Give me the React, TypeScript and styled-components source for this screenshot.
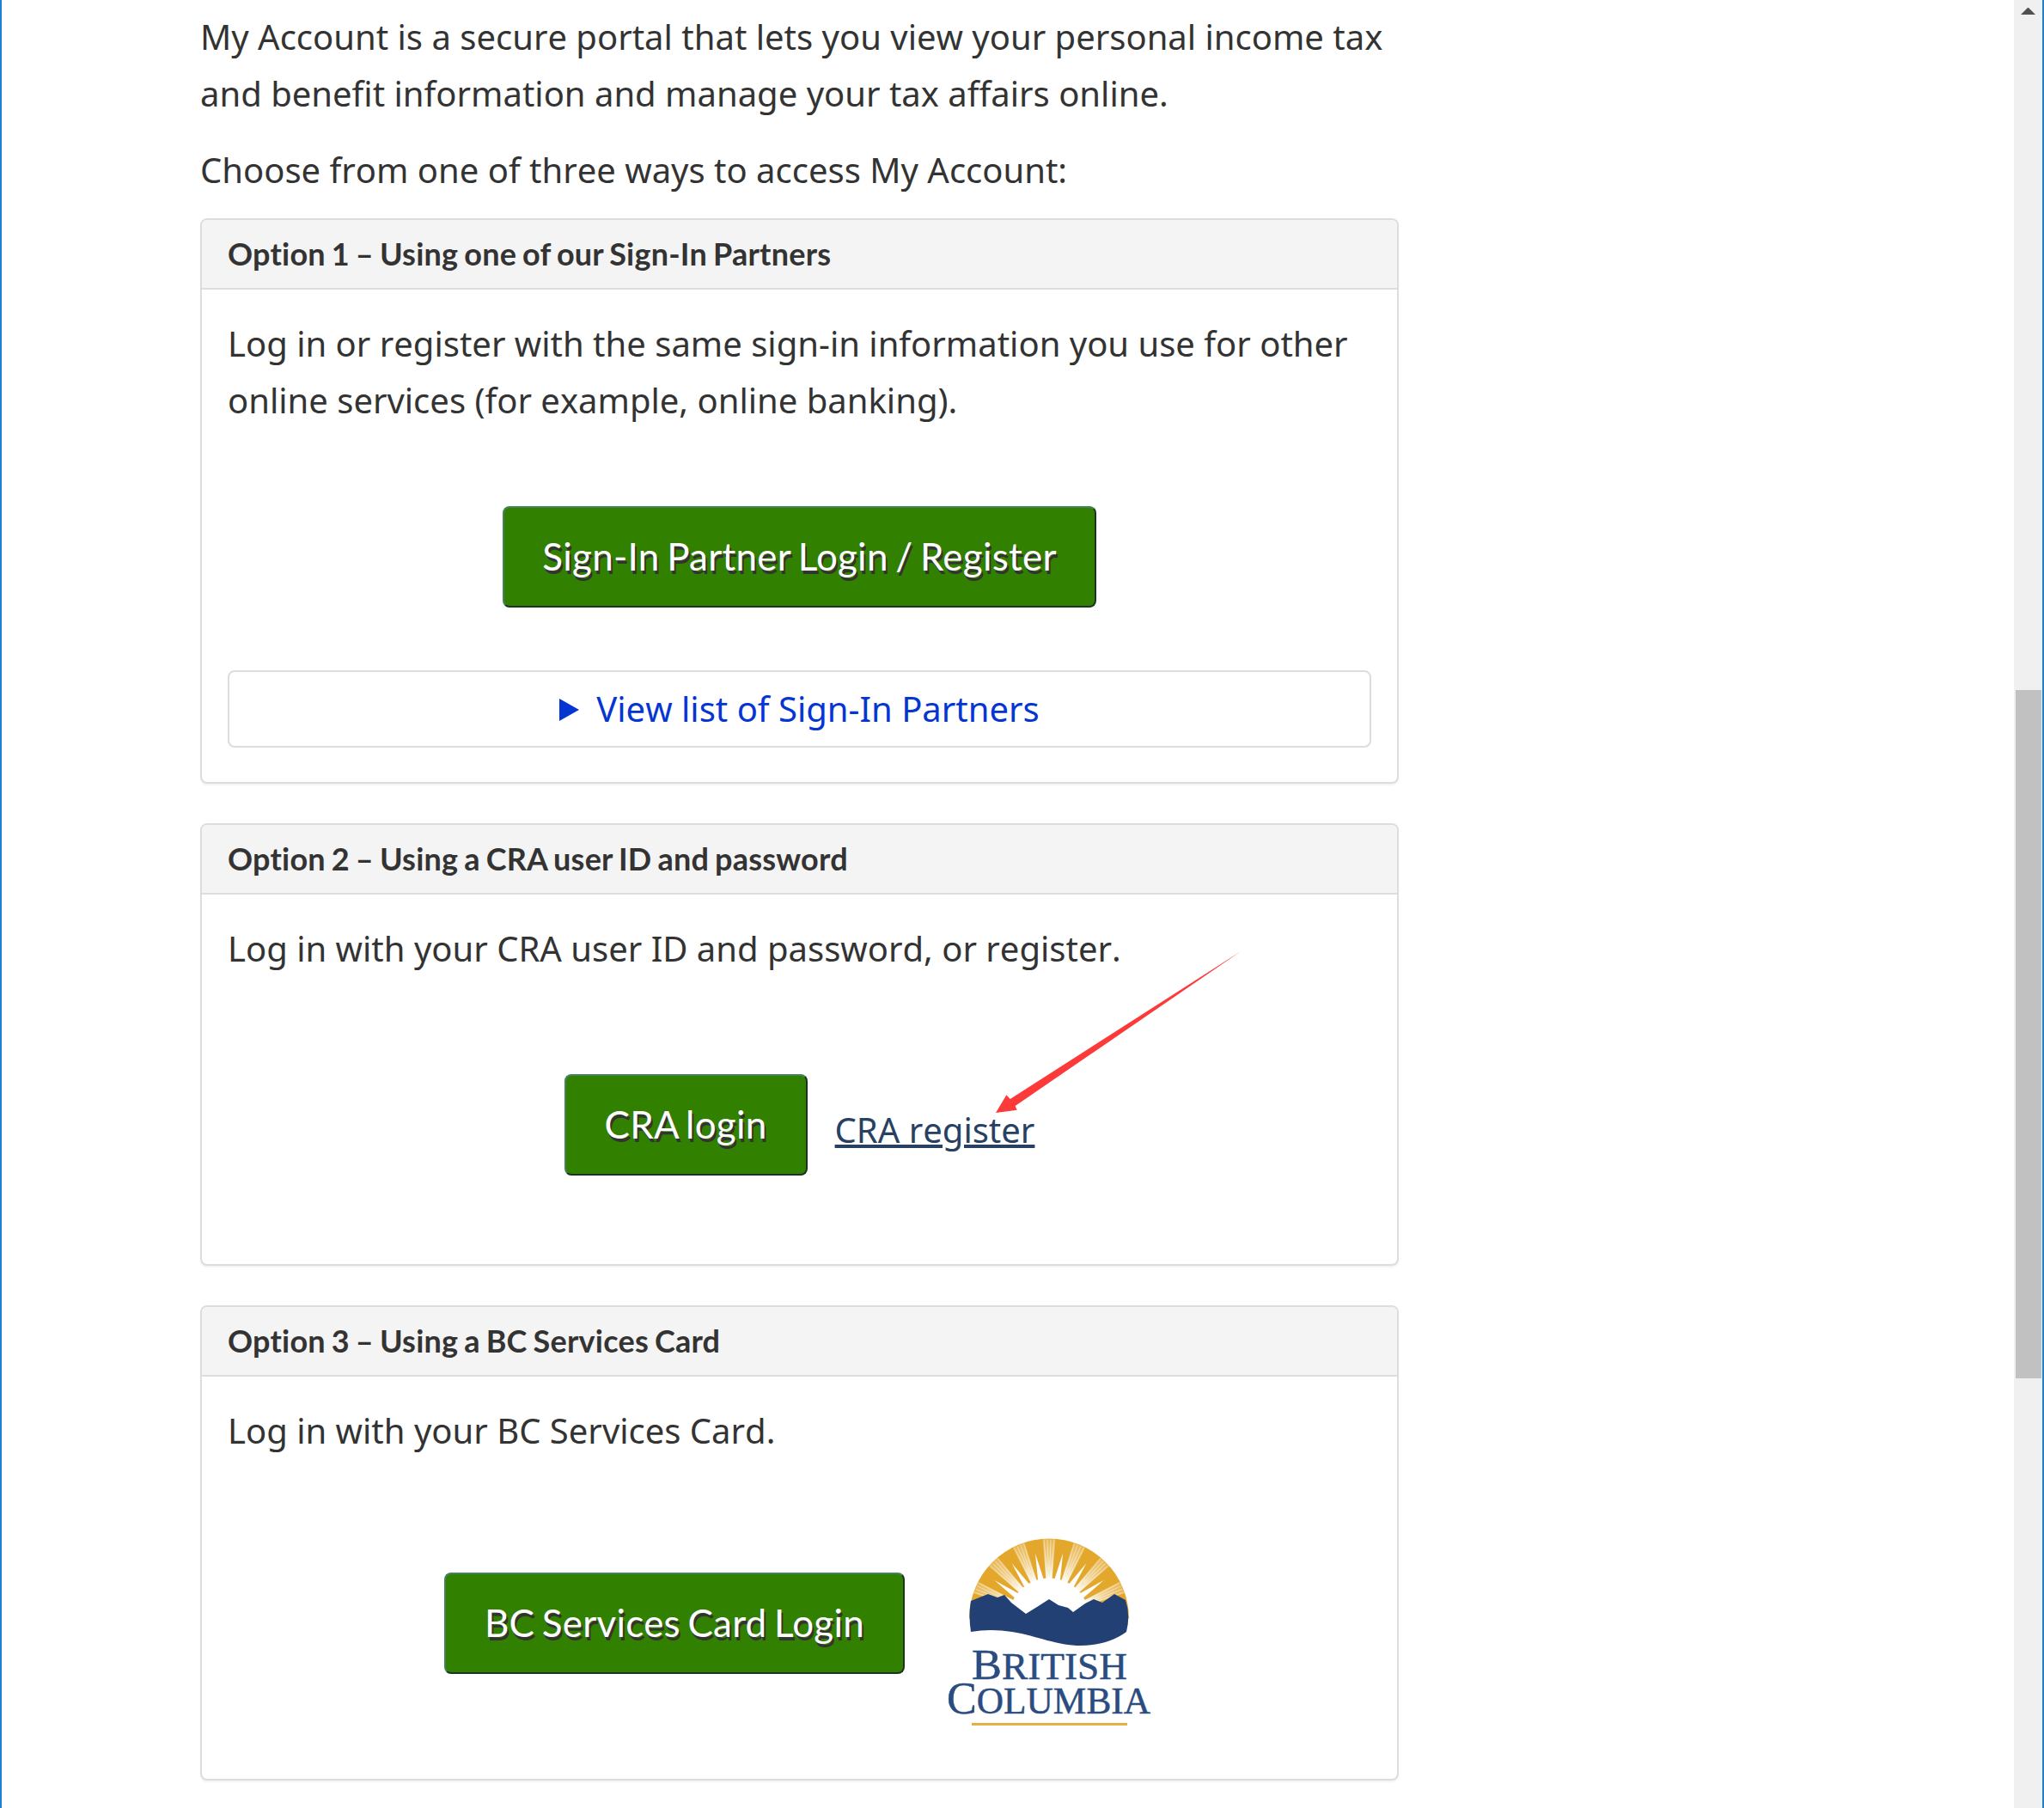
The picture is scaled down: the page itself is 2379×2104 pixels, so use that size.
import React from "react";
import styled, { createGlobalStyle } from "styled-components";

const GlobalStyle = createGlobalStyle`
  *, *::before, *::after { box-sizing: border-box; }
  html, body { margin: 0; height: 2104px; overflow: hidden; background: #fff; }
  body {
    font-family: "Noto Sans", sans-serif;
    font-size: 40px;
    line-height: 66px;
    font-kerning: none;
    font-variant-ligatures: none;
    color: #333;
  }
`;

const Window = styled.div`
  display: flex;
  width: 2379px;
  height: 2104px;
  overflow: hidden;
  border-left: 2px solid #1883d7;
  border-right: 2px solid #1883d7;
`;

const Content = styled.main`
  width: 2342px;
  padding: 10px 0 0 231px;
`;

const Column = styled.div`
  width: 1395px;
`;

const Text = styled.p`
  margin: 0 0 23px;
`;

const Panel = styled.section<{ $height: number }>`
  display: flex;
  flex-direction: column;
  height: ${(p) => p.$height}px;
  margin-bottom: 46px;
  border: 2px solid #ddd;
  border-radius: 8px;
  box-shadow: 0 2px 2px rgba(0, 0, 0, 0.05);
  background: #fff;
`;

const PanelHeading = styled.header`
  height: 81px;
  flex: none;
  padding: 19px 30px;
  border-bottom: 2px solid #ddd;
  border-radius: 6px 6px 0 0;
  background: #f4f4f4;
`;

const PanelTitle = styled.h3`
  margin: 0;
  font: 700 36px/40px Lato, sans-serif;
  font-variant-ligatures: none;
  letter-spacing: 0.22px;
  word-spacing: -2px;
`;

const PanelBody = styled.div`
  display: flex;
  flex-direction: column;
  padding: 30px;
`;

const Actions = styled.div<{ $top: number; $gap?: number; $indent?: number }>`
  display: flex;
  justify-content: center;
  align-items: center;
  gap: ${(p) => p.$gap ?? 0}px;
  margin-top: ${(p) => p.$top}px;
  padding-left: ${(p) => p.$indent ?? 0}px;
`;

const Button = styled.button<{ $width: number; $lift?: number }>`
  width: ${(p) => p.$width}px;
  height: 118px;
  margin: 0 0 ${(p) => p.$lift ?? 0}px;
  padding: 0 0 2px;
  border: 2px solid;
  border-color: #458259 #1c3423 #1c3423 #458259;
  border-radius: 8px;
  background: #318000;
  color: #fff;
  font: 400 44px/64px Lato, sans-serif;
  font-variant-ligatures: none;
  letter-spacing: 0.25px;
  word-spacing: -3px;
  white-space: nowrap;
  text-shadow: 2px 4px 0 #333;
`;

const Details = styled.details`
  height: 90px;
  margin-top: 73px;
  border: 2px solid #ddd;
  border-radius: 8px;
`;

const Summary = styled.summary`
  display: flex;
  justify-content: center;
  align-items: center;
  gap: 20px;
  height: 86px;
  color: #0535d2;
  list-style: none;
`;

const Marker = styled.svg`
  margin-top: 2px;
`;

const RegisterLink = styled.a`
  position: relative;
  margin-top: 12px;
  color: #284162;
  text-decoration: underline;
`;

const Arrow = styled.svg`
  position: absolute;
  left: 183px;
  top: -182px;
  overflow: visible;
  pointer-events: none;
`;

const Logo = styled.div`
  width: 290px;
  height: 270px;
`;

const Scrollbar = styled.aside`
  width: 33px;
  flex: none;
  display: flex;
  flex-direction: column;
  align-items: center;
  padding-top: 9px;
  background: #f0f0f0;
`;

const Thumb = styled.div`
  width: 30px;
  height: 801px;
  margin-top: 786px;
  background: #c1c1c1;
`;

const beamAngles = [-67, -44.5, -22.5, 0, 22.5, 44.5, 67];
const notchAngles = [-55, -34, -12, 12, 34, 55];

function BritishColumbiaLogo() {
  return (
    <svg width="290" height="270" viewBox="0 0 290 270" role="img" aria-label="British Columbia">
      <defs>
        <clipPath id="sunDisc">
          <path d="M48 123.5 A93 93 0 0 1 234 123.5 Z" />
        </clipPath>
        <linearGradient id="beam" gradientUnits="userSpaceOnUse" x1="0" y1="32" x2="0" y2="78">
          <stop offset="0" stopColor="#fff" stopOpacity="0.2" />
          <stop offset="0.55" stopColor="#fff" stopOpacity="0.5" />
          <stop offset="1" stopColor="#fff" />
        </linearGradient>
      </defs>
      <g clipPath="url(#sunDisc)">
        <rect x="45" y="25" width="195" height="100" fill="#e3a82b" />
        {beamAngles.map((a) => (
          <g key={a} transform={`rotate(${a} 141 123.5)`}>
            <path d="M133.5 30 H148.500 L144.500 79 H137.500 Z" fill="url(#beam)" />
            <path
              d="M135 32 L138.500 72 M139 32 L140.200 66 M143 32 L141.800 66 M147 32 L143.500 72"
              stroke="#fff"
              strokeOpacity="0.45"
              strokeWidth="1"
            />
          </g>
        ))}
        {notchAngles.map((a) => (
          <path
            key={a}
            transform={`rotate(${a} 141 123.5)`}
            d="M141 46 L144.500 79 H137.500 Z"
            fill="#fff"
          />
        ))}
        <circle cx="141" cy="123.5" r="47" fill="#fff" />
      </g>
      <path
        d="M50 103 L70 95 L81 99 L89 96 L97 105 L114 118 L127 110 L141 101 L152 108 L163 111 L169 116 L183 106 L193 101 L203 105 L217 95 L230 102 Q236 120 231 139 C215 151 194 155 178 155 C150 155 128 144 98 139 Q73 135 50 139 Q47 120 50 103 Z"
        fill="#234075"
      />
      <g
        fill="#2b4c80"
        stroke="#2b4c80"
        strokeWidth="0.5"
        fontFamily="'Liberation Serif', serif"
        fontSize="44"
      >
        <text x="51" y="194" textLength="181" lengthAdjust="spacingAndGlyphs">
          <tspan fontSize="51">B</tspan>RITISH
        </text>
        <text x="22" y="234" textLength="237" lengthAdjust="spacingAndGlyphs">
          <tspan fontSize="53">C</tspan>OLUMBIA
        </text>
      </g>
      <rect x="51" y="245" width="181" height="3" fill="#e6b040" />
    </svg>
  );
}

export default function App() {
  return (
    <Window>
      <GlobalStyle />
      <Content>
        <Column>
          <Text>
            My Account is a secure portal that lets you view your personal income tax
            <br />
            and benefit information and manage your tax affairs online.
          </Text>
          <Text>Choose from one of three ways to access My Account:</Text>
          <Panel $height={658}>
            <PanelHeading>
              <PanelTitle>Option 1 – Using one of our Sign-In Partners</PanelTitle>
            </PanelHeading>
            <PanelBody>
              <Text>
                Log in or register with the same sign-in information you use for other
                <br />
                online services (for example, online banking).
              </Text>
              <Actions $top={67}>
                <Button $width={691}>Sign-In Partner Login / Register</Button>
              </Actions>
              <Details>
                <Summary>
                  <Marker width="23" height="26" viewBox="0 0 23 26">
                    <path d="M0 0 L23 13 L0 26 Z" fill="#0535d2" />
                  </Marker>
                  View list of Sign-In Partners
                </Summary>
              </Details>
            </PanelBody>
          </Panel>
          <Panel $height={515}>
            <PanelHeading>
              <PanelTitle>Option 2 – Using a CRA user ID and password</PanelTitle>
            </PanelHeading>
            <PanelBody>
              <Text>Log in with your CRA user ID and password, or register.</Text>
              <Actions $top={90} $gap={32}>
                <Button $width={283}>CRA login</Button>
                <RegisterLink>
                  CRA register
                  <Arrow width="300" height="200" viewBox="1155 1100 300 200">
                    <path
                      d="M1159 1295 L1171.4 1274.3 L1175.7 1279 L1444.6 1106.7 L1181.6 1287 L1183.7 1291.7 Z"
                      fill="#fc3a3a"
                    />
                  </Arrow>
                </RegisterLink>
              </Actions>
            </PanelBody>
          </Panel>
          <Panel $height={553}>
            <PanelHeading>
              <PanelTitle>Option 3 – Using a BC Services Card</PanelTitle>
            </PanelHeading>
            <PanelBody>
              <Text>Log in with your BC Services Card.</Text>
              <Actions $top={39} $gap={27} $indent={26}>
                <Button $width={536} $lift={12}>BC Services Card Login</Button>
                <Logo>
                  <BritishColumbiaLogo />
                </Logo>
              </Actions>
            </PanelBody>
          </Panel>
        </Column>
      </Content>
      <Scrollbar>
        <svg width="17" height="8" viewBox="0 0 17 8">
          <path d="M0 8 L8 0 H9 L17 8 Z" fill="#505050" />
        </svg>
        <Thumb />
      </Scrollbar>
    </Window>
  );
}
